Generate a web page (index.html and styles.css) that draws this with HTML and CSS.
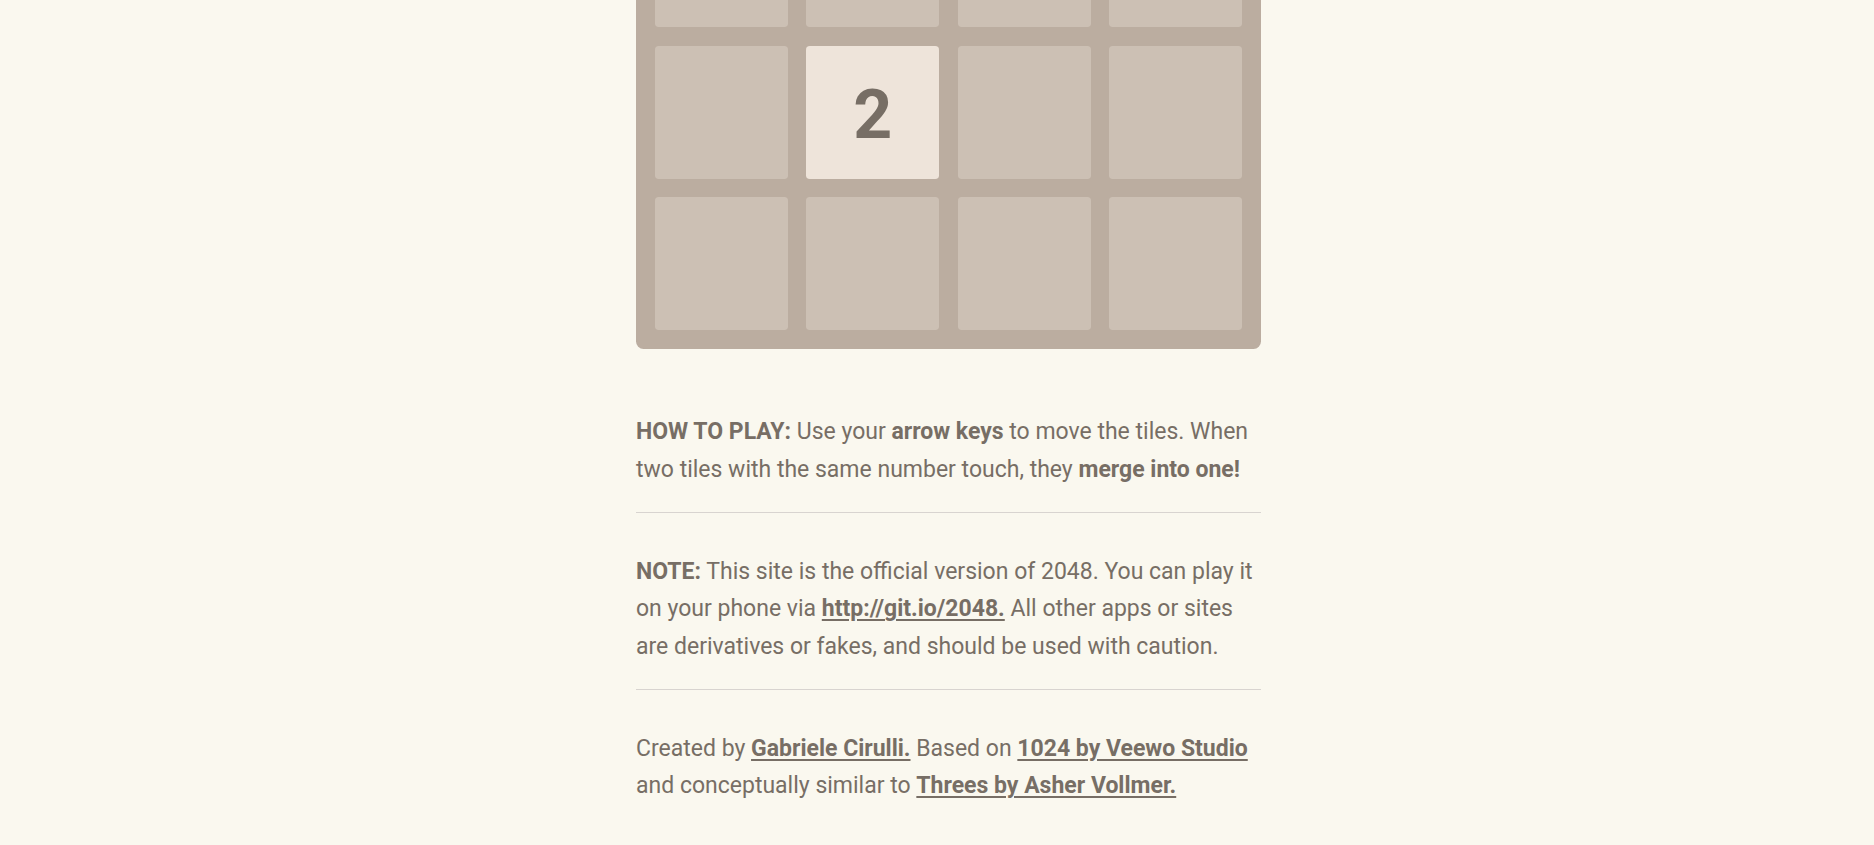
FILE: index.html
```html
<!DOCTYPE html>
<html lang="en">
<head>
<meta charset="utf-8">
<title>2048</title>
<link rel="stylesheet" href="styles.css">
</head>
<body>
<div class="container">
  <div class="board">
    <div class="cell"></div><div class="cell"></div><div class="cell"></div><div class="cell"></div>
    <div class="cell"></div><div class="cell"></div><div class="cell"></div><div class="cell"></div>
    <div class="cell"></div><div class="cell tile-2">2</div><div class="cell"></div><div class="cell"></div>
    <div class="cell"></div><div class="cell"></div><div class="cell"></div><div class="cell"></div>
  </div>
  <div class="explanation">
    <p><strong>HOW TO PLAY:</strong> Use your <strong>arrow keys</strong> to move the tiles. When two tiles with the same number touch, they <strong>merge into one!</strong></p>
    <hr>
    <p><strong>NOTE:</strong> This site is the official version of 2048. You can play it on your phone via <a href="#">http://git.io/2048.</a> All other apps or sites are derivatives or fakes, and should be used with caution.</p>
    <hr>
    <p>Created by <a href="#">Gabriele Cirulli.</a> Based on <a href="#">1024 by Veewo Studio</a> and conceptually similar to <a href="#">Threes by Asher Vollmer.</a></p>
  </div>
</div>
</body>
</html>
```

FILE: styles.css
```css
html, body {
  margin: 0;
  background: #faf8ef;
}

body {
  padding-left: 23px;
  color: #776e65;
  font-family: Roboto, "Liberation Sans", sans-serif;
  font-size: 23px;
  overflow: hidden;
}

.container {
  width: 625px;
  margin: -276px auto 0;
}

.board {
  display: grid;
  grid-template-columns: repeat(4, 1fr);
  gap: 18.75px;
  padding: 18.75px;
  background: #bbada0;
  border-radius: 7.5px;
}

.cell {
  height: 132.8px;
  background: rgba(238, 228, 218, 0.35);
  border-radius: 3.75px;
}

.tile-2 {
  background: #eee4da;
  color: #776e65;
  font-weight: bold;
  font-size: 68px;
  line-height: 138px;
  text-align: center;
}

.explanation {
  margin-top: 62.5px;
}

.explanation p {
  margin: 0 0 12.5px;
  padding-top: 2px;
  line-height: 37.5px;
}

.explanation strong {
  font-weight: bold;
}

.explanation a {
  color: #776e65;
  font-weight: bold;
  text-decoration: underline;
  text-decoration-thickness: 2px;
  text-underline-offset: 3px;
}

.explanation hr {
  border: none;
  border-bottom: 1px solid #d8d4d0;
  margin: 24px 0 37.5px;
}
```
